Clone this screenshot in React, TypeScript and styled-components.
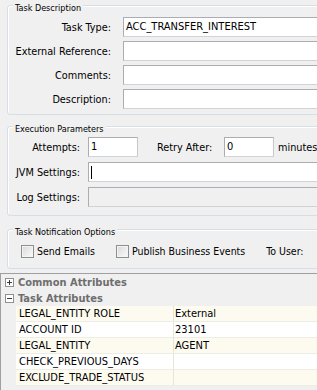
import React from "react";
import styled, { createGlobalStyle } from "styled-components";

const GlobalStyle = createGlobalStyle`
  html, body { margin: 0; padding: 0; background: #f0f0f0; }
  body {
    font-family: "DejaVu Sans Condensed", "DejaVu Sans", sans-serif;
    font-stretch: condensed;
    font-size: 11px;
    color: #000;
  }
`;

const Page = styled.div`
  width: 317px;
  height: 390px;
  overflow: hidden;
  background: #f0f0f0;
  display: flex;
  flex-direction: column;
`;

const Group = styled.section<{ $mt: number; $pb: number }>`
  flex: none;
  display: flex;
  flex-direction: column;
  width: 340px;
  margin: ${(p) => p.$mt}px 0 0 7px;
  padding: 0 0 ${(p) => p.$pb}px 0;
  border: 1px solid #d5dfe5;
  border-radius: 3px;
  box-shadow: inset 1px 1px 0 #ffffff;
`;

const Legend = styled.div`
  align-self: flex-start;
  margin: -3px 0 0 5px;
  padding: 0 2px;
  background: #f0f0f0;
  font-size: 9px;
  line-height: 11px;
  white-space: nowrap;
`;

const FormGrid = styled.div<{ $label: number; $colGap: number; $mt: number }>`
  display: grid;
  grid-template-columns: ${(p) => p.$label}px 1fr;
  column-gap: ${(p) => p.$colGap}px;
  row-gap: 4px;
  align-items: center;
  margin-top: ${(p) => p.$mt}px;
`;

const ExecGrid = styled(FormGrid)`
  row-gap: 5px;
`;

const Label = styled.label`
  text-align: right;
  white-space: nowrap;
  font-size: 10.8px;
`;

const Field = styled.div<{ $width?: number; $disabled?: boolean; $ml?: number }>`
  box-sizing: border-box;
  height: 20px;
  ${(p) => (p.$width ? `width: ${p.$width}px; flex: none;` : "")}
  margin-left: ${(p) => p.$ml ?? 0}px;
  border: 1px solid;
  border-color: #abadb3 #c5c8ce #d0d3d8 #abadb3;
  background: ${(p) => (p.$disabled ? "#f0f0f0" : "#ffffff")};
  padding: 0 2px;
  line-height: 18px;
  white-space: nowrap;
  overflow: hidden;
  display: flex;
  align-items: center;
`;

const Caret = styled.span`
  display: inline-block;
  width: 1px;
  height: 13px;
  background: #000;
`;

const InlineRow = styled.div`
  display: flex;
  align-items: center;
`;

const InlineLabel = styled.span<{ $ml: number; $w?: number }>`
  flex: none;
  margin-left: ${(p) => p.$ml}px;
  ${(p) => (p.$w ? `width: ${p.$w}px;` : "")}
  white-space: nowrap;
  font-size: 10.8px;
`;

const CheckRow = styled.div`
  display: flex;
  align-items: center;
  height: 14px;
  margin-top: 6px;
  padding-left: 13px;
`;

const CheckItem = styled.label<{ $ml: number }>`
  display: flex;
  align-items: center;
  gap: 3px;
  margin-left: ${(p) => p.$ml}px;
  white-space: nowrap;
  font-size: 10.5px;
`;

const Box = styled.span`
  box-sizing: border-box;
  width: 13px;
  height: 13px;
  border: 1px solid #8e8f8f;
  background: linear-gradient(135deg, #d8d8d8 0%, #eeeeee 60%, #fafafa 100%);
  box-shadow: inset 0 0 0 1px #f4f4f4;
`;

const Panel = styled.div`
  flex: 1;
  margin-top: 4px;
  border-top: 1px solid #a0a0a0;
  border-left: 1px solid #a0a0a0;
  display: flex;
  flex-direction: column;
`;

const GroupRow = styled.div`
  height: 16px;
  display: flex;
  align-items: center;
  gap: 4px;
  padding-left: 4px;
  font-weight: bold;
  font-size: 11px;
  color: #6e6e6e;
  white-space: nowrap;
`;

const PropRow = styled.div<{ $alt: boolean }>`
  box-sizing: border-box;
  height: 16px;
  margin-left: 15px;
  display: grid;
  grid-template-columns: 158px 1fr;
  background: ${(p) => (p.$alt ? "#fdfbef" : "#ffffff")};
  border-bottom: 1px solid #eeede4;
  line-height: 15px;
  white-space: nowrap;
`;

const NameCell = styled.div`
  padding-left: 3px;
  border-right: 1px solid #e6e5dc;
  overflow: hidden;
`;

const ValueCell = styled.div`
  padding-left: 1px;
  overflow: hidden;
`;

const Expander: React.FC<{ open: boolean }> = ({ open }) => (
  <svg width="9" height="9" viewBox="0 0 9 9" style={{ flex: "none" }}>
    <rect x="0.5" y="0.5" width="8" height="8" fill="#ffffff" stroke="#919191" />
    <line x1="2" y1="4.5" x2="7" y2="4.5" stroke="#3a3a3a" />
    {!open && <line x1="4.5" y1="2" x2="4.5" y2="7" stroke="#3a3a3a" />}
  </svg>
);

const props = [
  ["LEGAL_ENTITY ROLE", "External"],
  ["ACCOUNT ID", "23101"],
  ["LEGAL_ENTITY", "AGENT"],
  ["CHECK_PREVIOUS_DAYS", ""],
  ["EXCLUDE_TRADE_STATUS", ""],
];

export default function App() {
  return (
    <Page>
      <GlobalStyle />
      <Group $mt={5} $pb={5}>
        <Legend>Task Description</Legend>
        <FormGrid $label={103} $colGap={12} $mt={3}>
          <Label>Task Type:</Label>
          <Field>ACC_TRANSFER_INTEREST</Field>
          <Label>External Reference:</Label>
          <Field />
          <Label>Comments:</Label>
          <Field />
          <Label>Description:</Label>
          <Field />
        </FormGrid>
      </Group>

      <Group $mt={11} $pb={8}>
        <Legend>Execution Parameters</Legend>
        <ExecGrid $label={72} $colGap={8} $mt={2}>
          <Label>Attempts:</Label>
          <InlineRow>
            <Field $width={50}>1</Field>
            <InlineLabel $ml={19} $w={61}>Retry After:</InlineLabel>
            <Field $width={50} $ml={6}>0</Field>
            <InlineLabel $ml={4}>minutes</InlineLabel>
          </InlineRow>
          <Label>JVM Settings:</Label>
          <Field>
            <Caret />
          </Field>
          <Label>Log Settings:</Label>
          <Field $disabled />
        </ExecGrid>
      </Group>

      <Group $mt={13} $pb={10}>
        <Legend>Task Notification Options</Legend>
        <CheckRow>
          <CheckItem $ml={0}>
            <Box />
            Send Emails
          </CheckItem>
          <CheckItem $ml={21}>
            <Box />
            Publish Business Events
          </CheckItem>
          <CheckItem $ml={21}>To User:</CheckItem>
        </CheckRow>
      </Group>

      <Panel>
        <GroupRow>
          <Expander open={false} />
          Common Attributes
        </GroupRow>
        <GroupRow>
          <Expander open={true} />
          Task Attributes
        </GroupRow>
        {props.map(([k, v], i) => (
          <PropRow key={k} $alt={i % 2 === 0}>
            <NameCell>{k}</NameCell>
            <ValueCell>{v}</ValueCell>
          </PropRow>
        ))}
      </Panel>
    </Page>
  );
}
